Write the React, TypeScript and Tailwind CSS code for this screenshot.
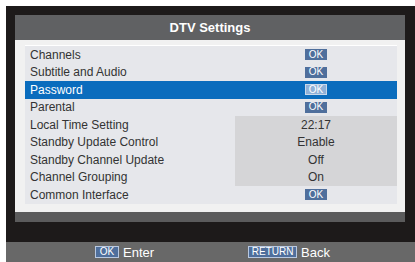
import React from "react";

const rows: { label: string; value?: string; ok?: boolean }[] = [
  { label: "Channels", ok: true },
  { label: "Subtitle and Audio", ok: true },
  { label: "Password", ok: true },
  { label: "Parental", ok: true },
  { label: "Local Time Setting", value: "22:17" },
  { label: "Standby Update Control", value: "Enable" },
  { label: "Standby Channel Update", value: "Off" },
  { label: "Channel Grouping", value: "On" },
  { label: "Common Interface", ok: true },
];

function OkBadge({ selected }: { selected?: boolean }) {
  return (
    <span
      className={
        selected
          ? "inline-flex items-center justify-center w-[22px] h-[11px] bg-[#8fb1d8] border border-[#c8d8ea] text-white text-[10px] leading-none"
          : "inline-flex items-center justify-center w-[22px] h-[11px] bg-[#4f6f9c] text-white text-[10px] leading-none"
      }
    >
      OK
    </span>
  );
}

export default function App() {
  return (
    <div
      className="w-[415px] h-[262px] bg-white pl-[6px] pt-[6px] overflow-hidden"
      style={{ fontFamily: '"Liberation Sans", Arial, sans-serif' }}
    >
      <div className="w-[409px] h-[256px] bg-[#1d1a1a] flex flex-col">
        <div className="pl-[9px] pt-[9px]">
          <div className="w-[390px] flex flex-col">
            <div className="h-[25px] bg-[#606163] flex items-center justify-center text-white font-bold text-[13px]">
              DTV Settings
            </div>
            <div className="h-[172px] bg-[#f1f1f1] pt-[5px] pl-[10px] pr-[8px]">
              <div className="bg-[#e6e7eb] border-t border-white">
                {rows.map((r, i) => {
                  const sel = i === 2;
                  return (
                    <div
                      key={r.label}
                      className={
                        sel
                          ? "h-[17.5px] flex items-center bg-[#0a6cbd] text-white"
                          : "h-[17.5px] flex items-center text-[#333]"
                      }
                    >
                      <div className="w-[210px] pl-[5px] text-[12px] leading-none whitespace-nowrap">
                        {r.label}
                      </div>
                      <div
                        className={
                          r.value
                            ? "flex-1 h-full flex items-center justify-center bg-[#d5d5d7] text-[12px] leading-none"
                            : "flex-1 h-full flex items-center justify-center"
                        }
                      >
                        {r.ok ? <OkBadge selected={sel} /> : r.value}
                      </div>
                    </div>
                  );
                })}
              </div>
            </div>
            <div className="h-[10px] bg-[#5b5b5c]" />
          </div>
        </div>
        <div className="h-[20px]" />
        <div className="h-[20px] bg-[#686868] flex items-center text-white text-[13px] leading-none">
          <div className="ml-[89px] flex items-center">
            <span className="inline-flex items-center justify-center w-[24px] h-[12px] bg-[#4f6f9c] border border-[#b8c8e0] text-[10px]">
              OK
            </span>
            <span className="ml-[4px]">Enter</span>
          </div>
          <div className="ml-[94px] flex items-center">
            <span className="inline-flex items-center justify-center w-[49px] h-[12px] bg-[#4f6f9c] border border-[#b8c8e0] text-[10px]">
              RETURN
            </span>
            <span className="ml-[4px]">Back</span>
          </div>
        </div>
      </div>
    </div>
  );
}
